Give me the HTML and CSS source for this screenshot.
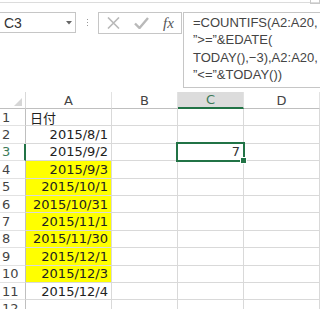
FILE: index.html
```html
<!doctype html>
<html>
<head>
<meta charset="utf-8">
<link rel="stylesheet" href="styles.css">
<title>COUNTIFS</title>
</head>
<body>
<div class="ribbon-edge"><span class="ribbon-btn"></span></div>

<div class="formula-bar">
  <div class="name-box">
    <span>C3</span>
    <svg class="caret" width="6" height="4" viewBox="0 0 6 4"><path d="M0 0h6L3 3.5z" fill="#666"/></svg>
  </div>
  <div class="grip"><i></i><i></i><i></i></div>
  <div class="buttons">
    <svg class="btn-x" width="13" height="12" viewBox="0 0 13 12"><path d="M1 .5l11 11M12 .5l-11 11" stroke="#b9b9b9" stroke-width="1.6" fill="none"/></svg>
    <svg class="btn-ok" width="15" height="12" viewBox="0 0 15 12"><path d="M1 6.5l4.5 4.5L14 1" stroke="#b9b9b9" stroke-width="2.4" fill="none"/></svg>
    <span class="fx">fx</span>
  </div>
  <div class="formula">=COUNTIFS(A2:A20,<br>”&gt;=”&amp;EDATE(<br>TODAY(),−3),A2:A20,<br>”&lt;=”&amp;TODAY())</div>
</div>

<div class="sheet">
  <div class="hd corner"><svg width="8" height="8" viewBox="0 0 8 8"><path d="M8 0V8H0z" fill="#d6d6d6"/></svg></div>
  <div class="hd col">A</div>
  <div class="hd col">B</div>
  <div class="hd col active">C</div>
  <div class="hd col">D</div>

  <div class="hd row">1</div><div class="cell left">日付</div><div class="cell"></div><div class="cell"></div><div class="cell"></div>
  <div class="hd row">2</div><div class="cell">2015/8/1</div><div class="cell"></div><div class="cell"></div><div class="cell"></div>
  <div class="hd row active">3</div><div class="cell">2015/9/2</div><div class="cell"></div><div class="cell selected">7</div><div class="cell"></div>
  <div class="hd row">4</div><div class="cell hl">2015/9/3</div><div class="cell"></div><div class="cell"></div><div class="cell"></div>
  <div class="hd row">5</div><div class="cell hl">2015/10/1</div><div class="cell"></div><div class="cell"></div><div class="cell"></div>
  <div class="hd row">6</div><div class="cell hl">2015/10/31</div><div class="cell"></div><div class="cell"></div><div class="cell"></div>
  <div class="hd row">7</div><div class="cell hl">2015/11/1</div><div class="cell"></div><div class="cell"></div><div class="cell"></div>
  <div class="hd row">8</div><div class="cell hl">2015/11/30</div><div class="cell"></div><div class="cell"></div><div class="cell"></div>
  <div class="hd row">9</div><div class="cell hl">2015/12/1</div><div class="cell"></div><div class="cell"></div><div class="cell"></div>
  <div class="hd row">10</div><div class="cell hl">2015/12/3</div><div class="cell"></div><div class="cell"></div><div class="cell"></div>
  <div class="hd row">11</div><div class="cell">2015/12/4</div><div class="cell"></div><div class="cell"></div><div class="cell"></div>
  <div class="hd row">12</div><div class="cell"></div><div class="cell"></div><div class="cell"></div><div class="cell"></div>
</div>
</body>
</html>
```

FILE: styles.css
```css
body {
    margin: 0;
    background: #fff;
    font-family: "DejaVu Sans", "Noto Sans CJK JP", sans-serif;
    color: #222;
    overflow: hidden;
}

.ribbon-edge {
    height: 2px;
    border-bottom: 1px solid #dcdcdc;
    position: relative;
}
.ribbon-btn {
    position: absolute;
    right: 0;
    top: -2px;
    width: 8px;
    height: 4px;
    border: 1px solid #c8c8c8;
}

/* formula bar */
.formula-bar {
    display: flex;
    align-items: flex-start;
    margin-top: 9px;
    height: 76px;
}
.name-box {
    box-sizing: border-box;
    margin-left: -1px;
    width: 77px;
    height: 21px;
    border: 1px solid #c6c6c6;
    display: flex;
    align-items: center;
    justify-content: space-between;
    padding: 0 3px 0 4px;
    font-family: "Liberation Sans", sans-serif;
    font-size: 14px;
    color: #333;
}
.caret {
    margin-top: 1px;
}
.grip {
    width: 22px;
    height: 21px;
    display: flex;
    flex-direction: column;
    align-items: center;
    justify-content: center;
    gap: 2px;
}
.grip i {
    display: block;
    width: 1px;
    height: 1px;
    background: #999;
}
.buttons {
    box-sizing: border-box;
    width: 84px;
    height: 22px;
    border: 1px solid #c6c6c6;
    display: flex;
    align-items: center;
    padding-left: 8px;
}
.btn-x {
    margin-right: 14px;
}
.btn-ok {
    margin-right: 14px;
}
.fx {
    font-family: "Liberation Serif", serif;
    font-style: italic;
    font-size: 15px;
    color: #555;
}
.formula {
    box-sizing: border-box;
    margin-left: 1px;
    flex: 1;
    height: 76px;
    border: 1px solid #c6c6c6;
    border-right: 0;
    padding: 1px 0 0 9px;
    font-family: "Liberation Sans", sans-serif;
    font-size: 13px;
    line-height: 17.4px;
    color: #444;
    white-space: nowrap;
}

/* sheet grid */
.sheet {
    margin-top: 4px;
    display: grid;
    grid-template-columns: 26px 86px 66px 66px 1fr;
    grid-template-rows: 17px repeat(12, 17.4px);
    font-size: 13px;
}
.sheet > div {
    box-sizing: border-box;
    border-right: 1px solid #d9d9d9;
    border-bottom: 1px solid #d9d9d9;
    display: flex;
    align-items: center;
    white-space: nowrap;
}
.hd {
    color: #444;
}
.hd.corner {
    justify-content: flex-end;
    align-items: flex-end;
    padding: 0 3px 2px 0;
    border-bottom-color: #bfbfbf;
}
.hd.col {
    justify-content: center;
    border-bottom-color: #bfbfbf;
    border-right-color: #e2e2e2;
}
.hd.col.active {
    background: #dcdcdc;
    color: #3c7a58;
    border-bottom: 2px solid #217346;
}
.hd.row {
    padding-left: 2px;
    border-right-color: #bfbfbf;
    border-bottom-color: #e2e2e2;
}
.hd.row.active {
    color: #3c7a58;
    border-right: 2px solid #217346;
}
.cell {
    justify-content: flex-end;
    padding-right: 3px;
}
.cell.left {
    justify-content: flex-start;
    padding-left: 4px;
}
.cell.hl {
    background: #ffff00;
}
.cell.selected {
    position: relative;
    color: #333;
}
.cell.selected::after {
    content: "";
    position: absolute;
    left: -2px;
    top: -2px;
    right: -2px;
    bottom: -2px;
    border: 2px solid #217346;
}
.cell.selected::before {
    content: "";
    position: absolute;
    right: -4px;
    bottom: -4px;
    width: 5px;
    height: 5px;
    background: #217346;
    border: 1px solid #fff;
    z-index: 1;
}
```
